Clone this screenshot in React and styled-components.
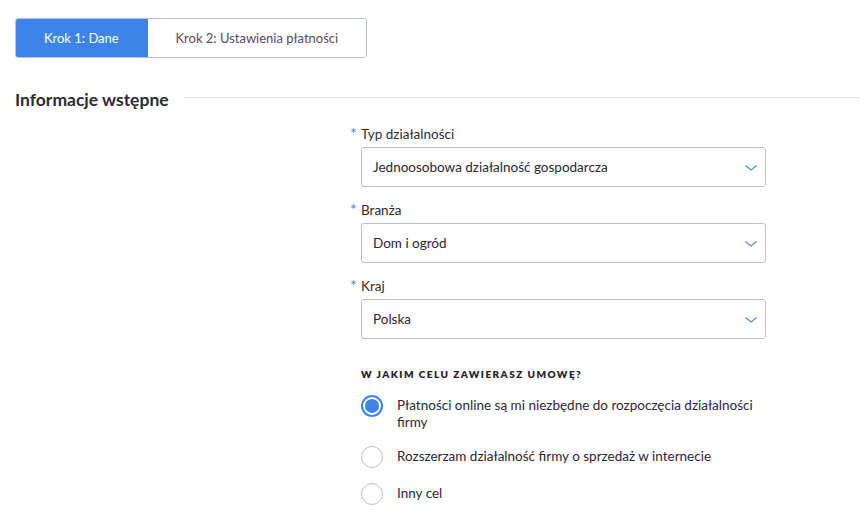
import styled, { createGlobalStyle } from "styled-components";

const GlobalStyle = createGlobalStyle`
  body {
    margin: 0;
    background: #ffffff;
    font-family: "Source Sans Pro", Lato, "Open Sans", sans-serif;
    color: #2b2d3a;
  }
`;

const Page = styled.div`
  width: 860px;
  padding: 18px 0 0 15px;
  box-sizing: border-box;
`;

const Tabs = styled.div`
  display: flex;
  width: 352px;
  height: 40px;
  border: 1px solid #b7c0d6;
  border-radius: 3px;
  overflow: hidden;
  box-sizing: border-box;
`;

const Tab = styled.div`
  display: flex;
  align-items: center;
  justify-content: center;
  width: ${(p) => p.$width}px;
  font-size: 13px;
  background: ${(p) => (p.$active ? "#3e84e8" : "#ffffff")};
  color: ${(p) => (p.$active ? "#ffffff" : "#5a4a5a")};
  margin: ${(p) => (p.$active ? "-1px 0 -1px -1px" : "0")};
`;

const SectionHeader = styled.div`
  display: flex;
  align-items: center;
  gap: 14px;
  margin-top: 31px;
`;

const SectionTitle = styled.h2`
  margin: 0;
  font-size: 17.5px;
  font-weight: 700;
  color: #2b2b35;
  white-space: nowrap;
`;

const Rule = styled.div`
  flex: 1;
  height: 1px;
  background: #e6e8ee;
  margin-top: -4px;
`;

const Form = styled.div`
  margin: 13px 0 0 335px;
  width: 416px;
`;

const Field = styled.div`
  margin-bottom: 12px;
`;

const Label = styled.div`
  display: flex;
  align-items: baseline;
  font-size: 13.5px;
  color: #2b2b35;
  height: 24px;
`;

const Star = styled.span`
  color: #3e84e8;
  width: 11px;
  font-size: 16px;
`;

const Select = styled.div`
  display: flex;
  align-items: center;
  justify-content: space-between;
  margin-left: 11px;
  height: 40px;
  border: 1px solid #b7c0d6;
  border-radius: 3px;
  padding: 0 7px 0 11px;
  box-sizing: border-box;
  font-size: 13.5px;
  color: #2b2636;
`;

const Question = styled.div`
  margin: 29px 0 0 11px;
  font-size: 10px;
  font-weight: 800;
  letter-spacing: 1.45px;
  color: #25222e;
`;

const Options = styled.div`
  margin: 17px 0 0 11px;
  display: flex;
  flex-direction: column;
  gap: 17px;
`;

const Option = styled.label`
  display: flex;
  align-items: flex-start;
  gap: 14px;
  font-size: 13.5px;
  line-height: 17px;
  color: #2b2636;
`;

const Radio = styled.span`
  flex: none;
  width: 22px;
  height: 22px;
  border-radius: 50%;
  box-sizing: border-box;
  border: ${(p) => (p.$checked ? "2px solid #3e84e8" : "1px solid #b7c0d6")};
  display: flex;
  align-items: center;
  justify-content: center;
  margin-top: -2px;
  &::after {
    content: "";
    display: ${(p) => (p.$checked ? "block" : "none")};
    width: 14px;
    height: 14px;
    border-radius: 50%;
    background: #3e84e8;
  }
`;

const OptionText = styled.span`
  width: 380px;
`;

function Chevron() {
  return (
    <svg width="14" height="9" viewBox="0 0 14 9" fill="none">
      <path d="M1.5 2.5 L7 7 L12.5 2.5" stroke="#4a8ce8" strokeWidth="1.1" />
    </svg>
  );
}

const fields = [
  { label: "Typ działalności", value: "Jednoosobowa działalność gospodarcza" },
  { label: "Branża", value: "Dom i ogród" },
  { label: "Kraj", value: "Polska" },
];

const options = [
  "Płatności online są mi niezbędne do rozpoczęcia działalności firmy",
  "Rozszerzam działalność firmy o sprzedaż w internecie",
  "Inny cel",
];

export default function App() {
  return (
    <Page>
      <GlobalStyle />
      <Tabs>
        <Tab $active $width={133}>Krok 1: Dane</Tab>
        <Tab $width={219}>Krok 2: Ustawienia płatności</Tab>
      </Tabs>
      <SectionHeader>
        <SectionTitle>Informacje wstępne</SectionTitle>
        <Rule />
      </SectionHeader>
      <Form>
        {fields.map((f) => (
          <Field key={f.label}>
            <Label>
              <Star>*</Star>
              {f.label}
            </Label>
            <Select>
              {f.value}
              <Chevron />
            </Select>
          </Field>
        ))}
        <Question>W JAKIM CELU ZAWIERASZ UMOWĘ?</Question>
        <Options>
          {options.map((o, i) => (
            <Option key={o}>
              <Radio $checked={i === 0} />
              <OptionText>{o}</OptionText>
            </Option>
          ))}
        </Options>
      </Form>
    </Page>
  );
}
